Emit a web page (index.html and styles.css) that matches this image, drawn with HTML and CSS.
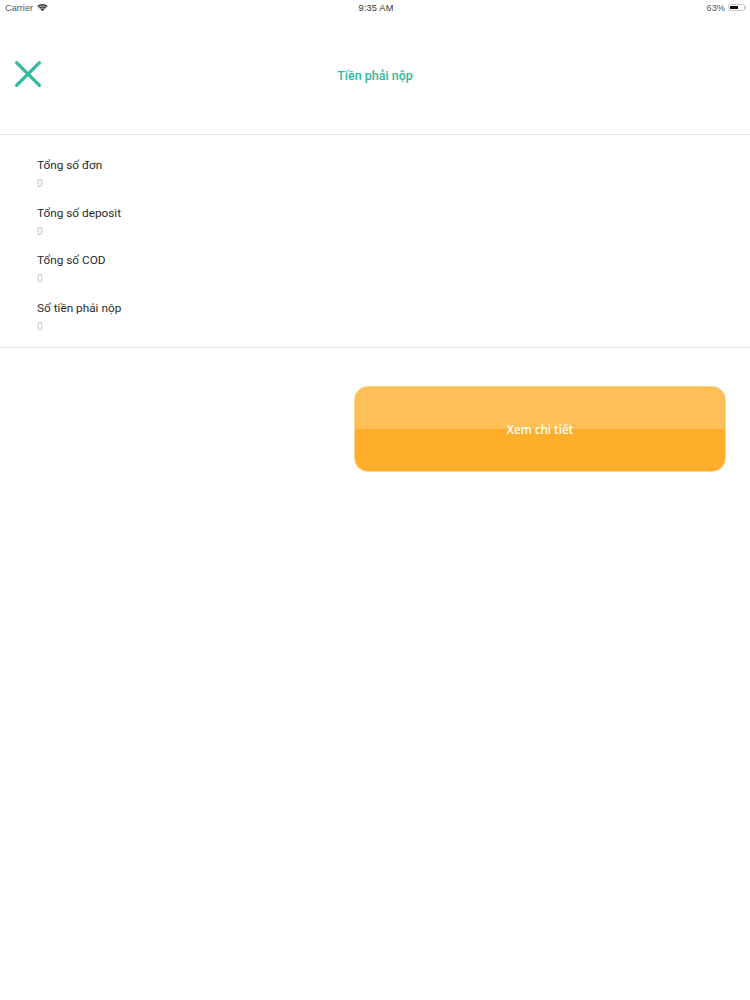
FILE: index.html
```html
<!DOCTYPE html>
<html lang="vi">
<head>
    <meta charset="UTF-8">
    <meta name="viewport" content="width=device-width, initial-scale=1.0">
    <title>Tiền phải nộp</title>
    <link rel="stylesheet" href="styles.css">
</head>
<body>
<div class="status-bar">
    <div class="status-left">
        <span>Carrier</span>
        <svg class="wifi" width="11" height="9" viewBox="0 0 12 9">
            <path d="M6 8.6 L0.3 2.8 C3.5 -0.2 8.5 -0.2 11.7 2.8 Z" fill="#333"/>
            <path d="M2 4.2 C4.4 2.4 7.6 2.4 10 4.2" stroke="#fff" stroke-width="0.8" fill="none"/>
            <path d="M3.6 6 C5 5 7 5 8.4 6" stroke="#fff" stroke-width="0.8" fill="none"/>
        </svg>
    </div>
    <div class="status-time">9:35 AM</div>
    <div class="status-right">
        <span>63%</span>
        <div class="battery"><div class="battery-level"></div></div>
        <div class="battery-cap"></div>
    </div>
</div>

<div class="header">
    <svg class="close-icon" width="28" height="28" viewBox="0 0 28 28">
        <path d="M2.6 2.6 L25.4 25.4 M25.4 2.6 L2.6 25.4" stroke="#2dbb9f" stroke-width="3.2" stroke-linecap="round"/>
    </svg>
    <div class="title">Tiền phải nộp</div>
</div>

<div class="info-list">
    <div class="info-row">
        <div class="info-label">Tổng số đơn</div>
        <div class="info-value">0</div>
    </div>
    <div class="info-row">
        <div class="info-label">Tổng số deposit</div>
        <div class="info-value">0</div>
    </div>
    <div class="info-row">
        <div class="info-label">Tổng số COD</div>
        <div class="info-value">0</div>
    </div>
    <div class="info-row">
        <div class="info-label">Số tiền phải nộp</div>
        <div class="info-value">0</div>
    </div>
</div>

<div class="actions">
    <button class="detail-button">Xem chi tiết</button>
</div>
</body>
</html>
```

FILE: styles.css
```css
body {
    font-family: Roboto, "Liberation Sans", sans-serif;
    background-color: #ffffff;
    margin: 0;
    padding: 0;
    color: #2b2b2b;
}
.status-bar {
    display: flex;
    justify-content: space-between;
    align-items: center;
    position: relative;
    height: 15px;
    padding: 0 4px 0 5px;
    font-family: "Liberation Sans", sans-serif;
    font-size: 9.2px;
    color: #555;
}
.status-left {
    display: flex;
    align-items: center;
    gap: 4px;
}
.status-time {
    position: absolute;
    left: 2px;
    right: 0;
    text-align: center;
    color: #333;
    letter-spacing: 0.2px;
}
.status-right {
    display: flex;
    align-items: center;
}
.battery {
    width: 17px;
    height: 7px;
    margin-left: 3px;
    padding: 1px;
    box-sizing: border-box;
    border: 1px solid #ccc;
    border-radius: 2px;
}
.battery-level {
    width: 63%;
    height: 100%;
    background-color: #111;
}
.battery-cap {
    width: 1px;
    height: 3px;
    background-color: #ccc;
}
.header {
    display: flex;
    align-items: center;
    justify-content: center;
    position: relative;
    height: 119px;
    border-bottom: 1px solid #e2e2e2;
}
.close-icon {
    position: absolute;
    left: 14px;
    top: 45px;
}
.title {
    font-size: 12.5px;
    font-weight: 500;
    color: #2dbb9f;
    margin-top: 1px;
}
.info-list {
    padding: 22px 37px 14px;
    border-bottom: 1px solid #e2e2e2;
}
.info-row {
    height: 47.5px;
}
.info-row:last-child {
    height: 33px;
}
.info-label {
    font-size: 11.8px;
    line-height: 16px;
    color: #2b2b2b;
}
.info-value {
    font-size: 10px;
    line-height: 12px;
    margin-top: 5px;
    color: #c4c4c4;
}
.actions {
    display: flex;
    justify-content: flex-end;
    padding: 38px 24px 0 0;
}
.detail-button {
    width: 372px;
    height: 86px;
    padding: 1px 0 0;
    border: 1px solid #fdd48c;
    border-radius: 14px;
    background: linear-gradient(to bottom, #ffbf57 0, #ffbf57 50%, #ffae2a 50%, #ffae2a 100%);
    color: #ffffff;
    font-family: "Open Sans", sans-serif;
    font-size: 11.6px;
    font-weight: 600;
    cursor: pointer;
}
```
